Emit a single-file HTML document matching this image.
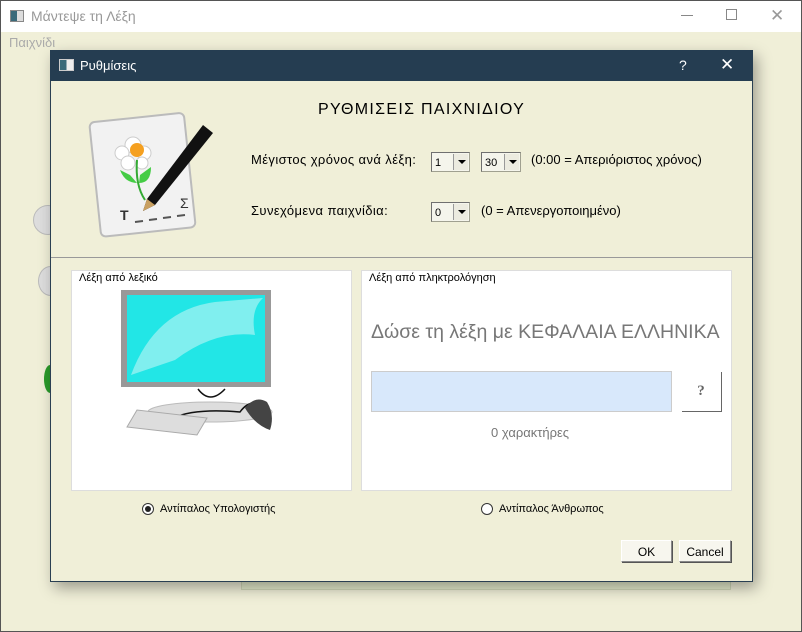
<!DOCTYPE html>
<html><head><meta charset="utf-8"><style>
*{margin:0;padding:0;box-sizing:border-box}
body{width:802px;height:632px;position:relative;overflow:hidden;background:#f0efd8;font-family:"Liberation Sans","DejaVu Sans",sans-serif;font-size:12px;color:#000}
.a{position:absolute}
.combo{position:absolute;height:20px;background:#f5f5ec;border:1px solid #a0a090;border-top-color:#707070;border-left-color:#707070;font-size:11px;padding:4px 0 0 3px}
.combo .b{position:absolute;right:1px;top:1px;width:15px;height:16px;background:#ecebe0;border-left:1px solid #999;}
.combo .b:after{content:"";position:absolute;left:4px;top:6px;border-left:4px solid transparent;border-right:4px solid transparent;border-top:4px solid #000}
.btn{position:absolute;background:#f7f6ee;border:1px solid #888;border-top-color:#fff;border-left-color:#fff;box-shadow:1px 1px 0 #555;text-align:center;font-size:12px}
.radio{position:absolute;width:12px;height:12px;border:1px solid #333;border-radius:50%;background:#fff}
</style></head><body>
<div class="a" style="left:0;top:0;width:802px;height:32px;background:#fff;border-top:1px solid #555"></div>
<div class="a" style="left:0;top:0;width:1px;height:632px;background:#555"></div>
<div class="a" style="right:0;top:0;width:1px;height:632px;background:#555"></div>
<div class="a" style="left:0;bottom:0;width:802px;height:1px;background:#555"></div>
<div class="a" style="left:10px;top:10px;width:14px;height:12px;border:1px solid #888;background:linear-gradient(90deg,#3a6a7a 50%,#ddd 50%)"></div>
<div class="a" style="left:31px;top:8px;font-size:14px;color:#999">Μάντεψε τη Λέξη</div>
<div class="a" style="left:681px;top:15px;width:12px;height:1px;background:#888"></div>
<div class="a" style="left:726px;top:9px;width:11px;height:11px;border:1px solid #888"></div>
<div class="a" style="left:770px;top:6px;font-size:17px;color:#999">✕</div>
<div class="a" style="left:9px;top:35px;font-size:13px;color:#aaa">Παιχνίδι</div>
<div class="a" style="left:33px;top:205px;width:30px;height:30px;border-radius:50%;background:#ddd;border:1px solid #bbb"></div>
<div class="a" style="left:38px;top:266px;width:25px;height:30px;border-radius:50%;background:#ddd;border:1px solid #bbb"></div>
<div class="a" style="left:44px;top:365px;width:12px;height:28px;border-radius:50%;background:#2a9a2a"></div>
<div class="a" style="left:241px;top:570px;width:490px;height:20px;background:#e4ebcc;border:1px solid #d0d8b8"></div>

<div class="a" style="left:50px;top:50px;width:703px;height:532px;background:#f0efd8;border:1px solid #2a3f52;box-shadow:4px 6px 14px rgba(0,0,0,.35)"></div>
<div class="a" style="left:50px;top:50px;width:703px;height:31px;background:#253d51"></div>
<div class="a" style="left:59px;top:59px;width:15px;height:12px;border:1px solid #ccc;background:linear-gradient(90deg,#3a6a7a 50%,#eee 50%)"></div>
<div class="a" style="left:80px;top:58px;font-size:13px;color:#fff">Ρυθμίσεις</div>
<div class="a" style="left:679px;top:57px;font-size:14px;color:#fff">?</div>
<div class="a" style="left:720px;top:55px;font-size:17px;color:#fff">✕</div>

<svg class="a" style="left:85px;top:105px" width="130" height="135" viewBox="0 0 130 135">
<g transform="rotate(-6 60 70)">
<rect x="10" y="12" width="95" height="115" rx="5" fill="#f2f2f2" stroke="#bbb" stroke-width="2"/>
</g>
<circle cx="48" cy="40" r="8" fill="#fff" stroke="#ccc"/><circle cx="37" cy="48" r="7" fill="#fff" stroke="#ccc"/><circle cx="59" cy="48" r="7" fill="#fff" stroke="#ccc"/><circle cx="43" cy="58" r="7" fill="#fff" stroke="#ccc"/><circle cx="57" cy="58" r="6" fill="#fff" stroke="#ccc"/>
<circle cx="52" cy="45" r="7" fill="#f5a020"/>
<path d="M52 55 Q50 80 60 95" stroke="#3a3" stroke-width="2" fill="none"/>
<path d="M45 70 L35 65 Q40 78 52 78 Z M55 70 L66 62 Q66 78 54 78Z" fill="#4c4"/>
<path d="M118 20 L128 28 L70 100 L58 106 L62 94 Z" fill="#111"/>
<path d="M62 94 L70 100 L58 106 Z" fill="#c9a060"/>
<text x="35" y="115" font-size="14" font-family="Liberation Sans" font-weight="bold" fill="#333">T</text>
<text x="95" y="103" font-size="14" font-family="Liberation Sans" fill="#333">Σ</text>
<path d="M50 117 L58 116 M64 115 L72 114 M78 113 L86 112 M92 111 L100 110" stroke="#555" stroke-width="2"/>
</svg>

<div class="a" style="left:318px;top:101px;font-size:16px;letter-spacing:1.3px">ΡΥΘΜΙΣΕΙΣ ΠΑΙΧΝΙΔΙΟΥ</div>
<div class="a" style="left:251px;top:152px;font-size:13px;letter-spacing:0.4px">Μέγιστος χρόνος ανά λέξη:</div>
<div class="combo" style="left:431px;top:152px;width:39px">1<span class="b"></span></div>
<div class="combo" style="left:481px;top:152px;width:40px">30<span class="b"></span></div>
<div class="a" style="left:531px;top:152px;font-size:13px">(0:00 = Απεριόριστος χρόνος)</div>
<div class="a" style="left:251px;top:203px;font-size:13px;letter-spacing:0.4px">Συνεχόμενα παιχνίδια:</div>
<div class="combo" style="left:431px;top:202px;width:39px">0<span class="b"></span></div>
<div class="a" style="left:481px;top:203px;font-size:13px">(0 = Απενεργοποιημένο)</div>
<div class="a" style="left:51px;top:257px;width:701px;height:1px;background:#999"></div>

<div class="a" style="left:71px;top:270px;width:281px;height:221px;background:#fff;border:1px solid #ddd"></div>
<div class="a" style="left:79px;top:272px;font-size:11px;background:#fff;padding-right:2px">Λέξη από λεξικό</div>
<svg class="a" style="left:115px;top:290px" width="170" height="150" viewBox="0 0 170 150">
<rect x="6" y="0" width="150" height="97" fill="#999"/>
<rect x="12" y="5" width="138" height="87" fill="#22e6e6"/>
<path d="M16 85 Q40 20 100 12 L148 8 Q135 20 140 45 Q100 40 60 70 Z" fill="#bff5f5" opacity=".6"/>
<ellipse cx="95" cy="122" rx="62" ry="10" fill="#ddd" stroke="#bbb"/>
<path d="M83 99 Q95 115 110 99 M55 140 L58 128 Q80 118 125 122 Q135 108 150 115" stroke="#111" fill="none" stroke-width="1.5"/>
<path d="M130 118 Q140 105 152 112 Q160 125 155 140 Q140 135 130 118Z" fill="#444"/>
<path d="M30 157 L40 140 L110 148 L100 165 Z" fill="#ddd" stroke="#aaa" transform="translate(-18,-20)"/>
</svg>

<div class="a" style="left:361px;top:270px;width:371px;height:221px;background:#fff;border:1px solid #ddd"></div>
<div class="a" style="left:369px;top:272px;font-size:11px;background:#fff;padding-right:2px">Λέξη από πληκτρολόγηση</div>
<div class="a" style="left:371px;top:321px;font-size:19.5px;color:#777">Δώσε τη λέξη με ΚΕΦΑΛΑΙΑ ΕΛΛΗΝΙΚΑ</div>
<div class="a" style="left:371px;top:371px;width:301px;height:41px;background:#d8e8fb;border:1px solid #ccc"></div>
<div class="btn" style="left:681px;top:371px;width:40px;height:40px;background:#fff;border-color:#fff;box-shadow:1px 1px 0 #666;padding-top:11px;font-family:'Liberation Serif',serif;font-weight:bold;font-size:15px;color:#666">?</div>
<div class="a" style="left:491px;top:425px;font-size:13px;color:#777">0 χαρακτήρες</div>

<div class="radio" style="left:142px;top:503px"><div style="width:6px;height:6px;border-radius:50%;background:#222;margin:2px"></div></div>
<div class="a" style="left:160px;top:503px;font-size:11px">Αντίπαλος Υπολογιστής</div>
<div class="radio" style="left:481px;top:503px"></div>
<div class="a" style="left:499px;top:503px;font-size:11px">Αντίπαλος Άνθρωπος</div>

<div class="btn" style="left:621px;top:540px;width:51px;height:22px;padding-top:4px">OK</div>
<div class="btn" style="left:679px;top:540px;width:52px;height:22px;padding-top:4px">Cancel</div>
</body></html>
